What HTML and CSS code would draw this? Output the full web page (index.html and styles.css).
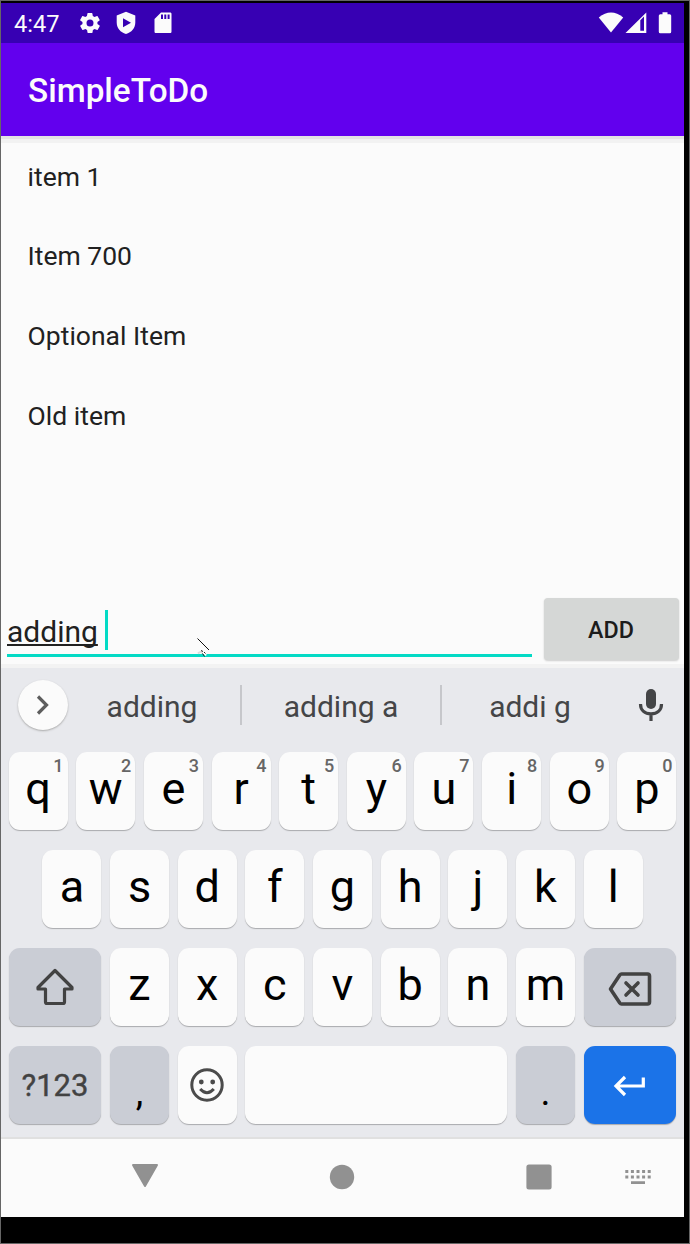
FILE: index.html
```html
<!DOCTYPE html>
<html lang="en">
<head>
<meta charset="utf-8">
<title>SimpleToDo</title>
<link rel="stylesheet" href="styles.css">
</head>
<body>
<div class="frame">
<main class="screen">
  <header class="status">
    <span class="clock">4:47</span>
    <svg class="gear" width="24" height="24" viewBox="0 0 24 24"><path fill-rule="evenodd" d="M19.4 13a7.500 7.500 0 0 0 0-2l2.100-1.600c.2-.2.3-.4.1-.7l-2-3.400c-.1-.2-.4-.3-.6-.2l-2.500 1a7.300 7.300 0 0 0-1.700-1l-.4-2.600a.5.5 0 0 0-.5-.4h-4a.5.5 0 0 0-.5.4L9 5.100a7.300 7.300 0 0 0-1.700 1l-2.500-1c-.2-.1-.5 0-.6.2l-2 3.400c-.1.200-.1.500.1.700L4.500 11a7.500 7.500 0 0 0 0 2l-2.100 1.600c-.2.200-.3.400-.1.700l2 3.400c.1.200.4.300.6.200l2.500-1c.5.400 1.100.7 1.700 1l.4 2.600c0 .3.200.4.500.4h4c.3 0 .5-.1.500-.4l.4-2.600c.6-.3 1.200-.6 1.700-1l2.500 1c.2.100.5 0 .6-.2l2-3.400c.1-.2.1-.5-.1-.7zM12 15.500a3.500 3.500 0 1 1 0-7 3.500 3.500 0 0 1 0 7z"/></svg>
    <svg class="shield" width="20" height="24" viewBox="0 0 20 24"><path fill-rule="evenodd" d="M10 .8 19.300 4.500v7C19.300 17 15.500 21.500 10 23 4.500 21.500.7 17 .7 11.500v-7zM7 7.300v9l8-4.500z"/></svg>
    <svg class="sd" width="18" height="24" viewBox="0 0 18 24"><path fill-rule="evenodd" d="M7 1.500h9c1 0 1.500.5 1.500 1.500v17.500c0 1-.5 1.500-1.500 1.500H2c-1 0-1.500-.5-1.500-1.500V8zM7 3.500V8h2V3.500zm3.300 0V8h2V3.500zm3.300 0V8h2V3.500z"/></svg>
    <span class="spacer"></span>
    <svg class="wifi" width="26" height="24" viewBox="0 0 26 24"><path d="M.8 6.500Q13-3.500 25.200 6.500L13 21.500z"/></svg>
    <svg class="signal" width="22" height="24" viewBox="0 0 22 24"><path fill-rule="evenodd" d="M21.300 1.500V22H.5zM15.300 9.200v10.600H19V5.500z"/></svg>
    <svg class="battery" width="14" height="24" viewBox="0 0 14 24"><path d="M4.500 1.300h5v1.900h2.200q1.500 0 1.500 1.500v16q0 1.500-1.500 1.500h-9.400q-1.500 0-1.500-1.500v-16q0-1.500 1.500-1.500h2.200z"/></svg>
  </header>
  <div class="appbar"><h1>SimpleToDo</h1></div>
  <section class="content">
    <ul class="list">
      <li>item 1</li>
      <li>Item 700</li>
      <li>Optional Item</li>
      <li>Old item</li>
    </ul>
    <div class="entry">
      <div class="field"><span class="typed">adding</span><span class="caret"></span>
        <svg class="pointer" width="14" height="20" viewBox="0 0 14 20" fill="none"><path d="M.5.500 12 12" stroke="#111"/><path d="M1 15.500q3-3 5 0" stroke="#ddd" stroke-width="2"/><path d="m6 13.500 3 4" stroke="#fff" stroke-width="2"/><path d="m4 12.500 2 1M7 14l1.500 1.500M5.500 15.500l2 3" stroke="#222"/></svg>
      </div>
      <button class="add">ADD</button>
    </div>
  </section>
  <section class="keyboard">
    <div class="suggest">
      <span class="expand"><svg width="50" height="50" viewBox="0 0 50 50" fill="none" stroke="#5d5d5d" stroke-width="3.200"><path d="m20 16.500 8.500 8.500-8.500 8.500"/></svg></span>
      <span class="word w1">adding</span>
      <span class="word w2">adding a</span>
      <span class="word w3">addi g</span>
      <svg class="mic" width="26" height="34" viewBox="0 0 26 34"><rect x="8" y="1" width="10" height="20" rx="5" fill="#444547"/><path d="M2.500 16c0 6.500 4.500 9.800 10.500 9.800S23.500 22.500 23.500 16M13 26v7" fill="none" stroke="#444547" stroke-width="3.200"/></svg>
    </div>
    <div class="row">
      <span class="key">q<sup>1</sup></span><span class="key">w<sup>2</sup></span><span class="key">e<sup>3</sup></span><span class="key">r<sup>4</sup></span><span class="key">t<sup>5</sup></span><span class="key">y<sup>6</sup></span><span class="key">u<sup>7</sup></span><span class="key">i<sup>8</sup></span><span class="key">o<sup>9</sup></span><span class="key">p<sup>0</sup></span>
    </div>
    <div class="row">
      <span class="key">a</span><span class="key">s</span><span class="key">d</span><span class="key">f</span><span class="key">g</span><span class="key">h</span><span class="key">j</span><span class="key">k</span><span class="key">l</span>
    </div>
    <div class="row">
      <span class="key wide dark icon"><svg width="40" height="40" viewBox="0 0 40 40" fill="none" stroke="#424242" stroke-width="3.200" stroke-linejoin="round"><path d="M20 3.500 37 20.500v1.500h-7.500v13q0 1.500-1.500 1.500H12q-1.500 0-1.500-1.500V22H3v-1.500z"/></svg></span>
      <span class="key">z</span><span class="key">x</span><span class="key">c</span><span class="key">v</span><span class="key">b</span><span class="key">n</span><span class="key">m</span>
      <span class="key wide dark icon erase"><svg width="44" height="36" viewBox="0 0 44 36" fill="none" stroke="#424242" stroke-width="3.600" stroke-linejoin="round"><path d="M13.500 3h26q2 0 2 2v26q0 2-2 2h-26q-1 0-1.700-1L2.500 18l9.300-14q.7-1 1.700-1z"/><path d="m18 12 12 12m0-12L18 24" stroke-linecap="round"/></svg></span>
    </div>
    <div class="row">
      <span class="key wide dark symbols">?123</span>
      <span class="key dark punct">,</span>
      <span class="key icon"><svg width="36" height="36" viewBox="0 0 36 36" fill="none" stroke="#4b4b4b" stroke-width="3"><circle cx="18" cy="18" r="15.200"/><g fill="#4b4b4b" stroke="none"><circle cx="12.300" cy="15" r="2.400"/><circle cx="23.700" cy="15" r="2.400"/></g><path d="M11.200 22q6.800 7.500 13.600 0"/></svg></span>
      <span class="key space"></span>
      <span class="key dark punct">.</span>
      <span class="key wide enter icon"><svg width="34" height="24" viewBox="0 0 34 24" fill="none" stroke="#fff" stroke-width="3.200"><path d="M31.300 3.500V12H4M13 3l-9 9 9 9"/></svg></span>
    </div>
  </section>
  <nav class="nav">
    <svg class="back" width="28" height="26" viewBox="0 0 28 26"><path d="M2 2h24L14 23z" stroke="#919191" stroke-width="2" stroke-linejoin="round"/></svg>
    <svg class="home" width="26" height="26" viewBox="0 0 26 26"><circle cx="13" cy="13" r="12.200"/></svg>
    <svg class="recent" width="26" height="26" viewBox="0 0 26 26"><rect x=".4" y=".4" width="25.200" height="25.200" rx="2.500"/></svg>
    <svg class="ime" width="26" height="16" viewBox="0 0 26 16"><path d="M.3 1h3v3h-3zm5.600 0h3v3h-3zm5.600 0h3v3h-3zm5.600 0h3v3h-3zm5.600 0h3v3h-3zM.3 6.600h3v3h-3zm5.600 0h3v3h-3zm5.600 0h3v3h-3zm5.600 0h3v3h-3zm5.600 0h3v3h-3zM6 12.200h14V15H6z"/></svg>
  </nav>
</main>
</div>
</body>
</html>
```
FILE: styles.css
```css
* { box-sizing: border-box; }
body { margin: 0; background: #000; font-family: Roboto, "Noto Sans", sans-serif; }
svg { display: block; flex: none; }
.frame { width: 690px; height: 1244px; border: 1px solid #666; padding: 2px 0 0; background: #000; overflow: hidden; }
.screen { width: 683px; height: 1214px; background: #fbfbfb; display: flex; flex-direction: column; }
.status { height: 40px; flex: none; background: #3700b3; color: #fbfbfb; display: flex; align-items: center; padding: 0 12px 0 13px; }
.status svg { fill: #fbfbfb; }
.clock { font-size: 23.6px; width: 63px; white-space: nowrap; padding-top: 1px; }
.gear { margin-left: .5px; }
.shield { margin-left: 14.500px; }
.sd { margin-left: 18px; }
.spacer { flex: 1; }
.signal { margin-left: 1px; }
.battery { margin-left: 11px; }
.appbar { height: 93px; flex: none; background: #6200ee; padding-left: 27px; display: flex; align-items: center; }
h1 { margin: 3px 0 0; font-size: 33.3px; font-weight: 500; color: #fbfbfb; line-height: 40px; }
.content { height: 532px; flex: none; background: linear-gradient(#e4e4e4 0 3px, #f2f2f2 3px 7px, #fbfbfb 7px 528px, #f3f3f3 528px); display: flex; flex-direction: column; justify-content: space-between; }
.list { list-style: none; margin: 0; padding: .6px 0 0 26.600px; }
.list li { height: 79.6px; display: flex; align-items: center; font-size: 26.5px; color: #212121; }
.entry { display: flex; justify-content: space-between; padding: 0 5px 8px 6px; }
.field { position: relative; width: 525px; height: 51px; margin-top: 8px; border-bottom: 3px solid #03dac5; display: flex; align-items: flex-start; align-self: flex-end; margin-bottom: 3px; }
.typed { font-size: 30px; line-height: 35px; margin-top: 8px; color: #212121; text-decoration: underline; text-decoration-thickness: 1.500px; text-underline-offset: 2px; text-decoration-skip-ink: none; }
.caret { width: 3px; height: 40px; background: #03dac5; margin: 4px 0 0 7px; }
.pointer { position: absolute; left: 190px; top: 32px; }
.add { width: 135px; height: 62px; border: 0; border-radius: 4px; background: #d5d7d6; font: 500 23.3px Roboto, sans-serif; color: #1c1c1c; box-shadow: 0 1px 2px #ccc; padding: 1px 1px 0 0; }
.keyboard { height: 471px; flex: none; background: #e8e9ed; border-bottom: 2px solid #e0e0e0; padding: 0 7.500px; display: flex; flex-direction: column; }
.suggest { height: 74px; flex: none; margin-bottom: 10px; display: flex; align-items: center; }
.expand { width: 50px; height: 50px; margin: 0 0 0 9px; border-radius: 50%; background: #fbfbfb; box-shadow: 0 1px 2px #aaa; }
.word { font-size: 30px; color: #444547; height: 40px; line-height: 43px; text-align: center; }
.w1 { width: 174.500px; padding-right: 3.500px; border-right: 2px solid #c6c7cb; }
.w2 { width: 200px; border-right: 2px solid #c6c7cb; }
.w3 { width: 176px; }
.mic { margin-left: 20px; }
.row { flex: none; display: flex; justify-content: center; gap: 8.670px; height: 78px; margin-bottom: 20px; }
.row:last-child { margin-bottom: 0; }
.key { position: relative; width: 59px; flex: none; height: 78px; border-radius: 11px; background: #fbfbfb; box-shadow: 0 1px 1px #a9aaad; font-size: 45px; color: #000; display: flex; align-items: center; justify-content: center; padding-bottom: 5px; }
.key sup { position: absolute; right: 4px; top: 4px; font-size: 18px; line-height: 20px; font-weight: 500; color: #666; }
.icon { padding-bottom: 0; }
.erase { padding-top: 3px; }
.wide { width: 92.500px; }
.dark { background: #cacdd5; }
.symbols { font-size: 31px; color: #424242; -webkit-text-stroke: .4px #424242; padding-bottom: 0; }
.punct { padding: 14px 0 0; font-size: 38px; }
.space { width: 262.200px; }
.enter { background: #1b73e8; padding: 2px 2px 0 0; }
.nav { height: 78px; display: flex; align-items: center; padding: 0 0 2px 130px; }
.nav svg { fill: #919191; }
.back { margin-bottom: 2px; }
.home { margin-left: 170px; }
.recent { margin-left: 171px; }
.ime { margin-left: 73px; }
```
